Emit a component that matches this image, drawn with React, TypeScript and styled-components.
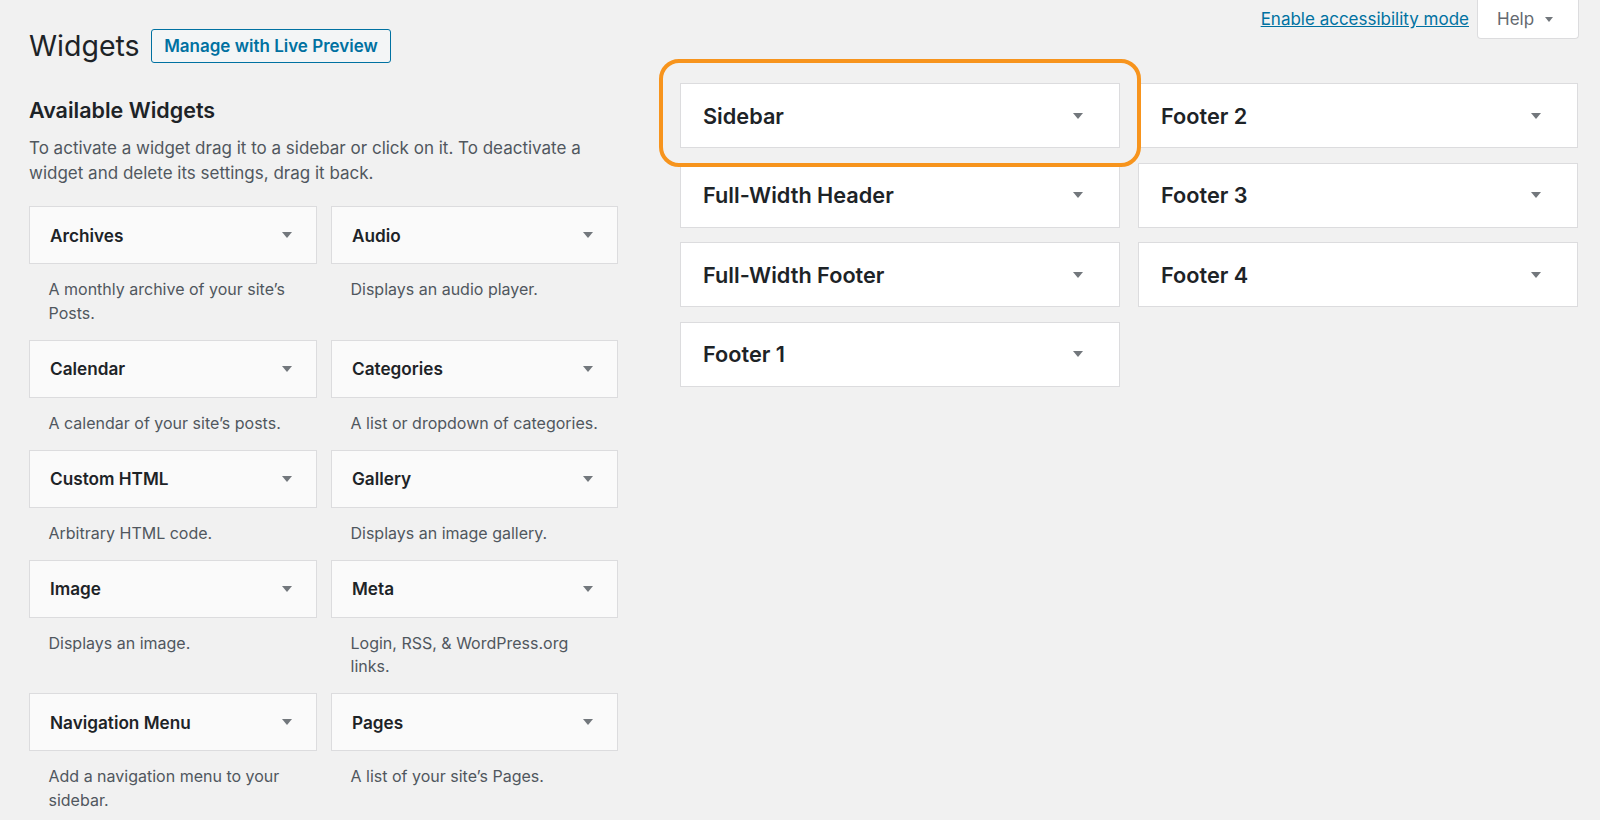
import React from "react"
import styled, { createGlobalStyle } from "styled-components"

const GlobalStyle = createGlobalStyle`
  html, body {
    margin: 0;
    padding: 0;
    background: #f1f1f1;
    font-family: Inter, "Noto Sans", "Liberation Sans", sans-serif;
    color: #1d2327;
  }
`

const Page = styled.div`
  padding: 0 21px 0 29px;
  min-height: 820px;
  box-sizing: border-box;
`

const TopBar = styled.div`
  display: flex;
  justify-content: space-between;
  align-items: flex-start;
`

const TitleRow = styled.div`
  display: flex;
  align-items: center;
  gap: 11px;
  padding-top: 29px;
`

const PageTitle = styled.h1`
  margin: 0;
  font-size: 28.5px;
  font-weight: 400;
  line-height: 34px;
  color: #1d2327;
`

const OutlineButton = styled.button`
  height: 34px;
  padding: 0 12.5px;
  border: 1px solid #0071a1;
  border-radius: 3px;
  background: #f3f5f6;
  color: #0071a1;
  font-family: inherit;
  font-size: 17px;
  font-weight: 600;
`

const MetaLinks = styled.div`
  display: flex;
  align-items: flex-start;
  gap: 8px;
`

const A11yLink = styled.a`
  margin-top: 8px;
  font-size: 17px;
  line-height: 22px;
  color: #0071a1;
  text-decoration: underline;
`

const HelpTab = styled.button`
  display: flex;
  align-items: center;
  gap: 11px;
  width: 102px;
  height: 39px;
  padding: 0 0 0 19px;
  border: 1px solid #dcdcde;
  border-top: none;
  border-radius: 0 0 4px 4px;
  background: #fff;
  color: #646970;
  font-family: inherit;
  font-size: 17px;
`

const Columns = styled.div`
  display: grid;
  grid-template-columns: 589px 1fr;
  gap: 62px;
  margin-top: 20px;
`

const LeftColumn = styled.div`
  padding-top: 13px;
`

const SectionTitle = styled.h2`
  margin: 0;
  font-size: 21.5px;
  font-weight: 600;
  line-height: 28px;
`

const Intro = styled.p`
  margin: 12px 0 21px;
  font-size: 17px;
  line-height: 24.5px;
  color: #50575e;
`

const WidgetGrid = styled.div`
  display: grid;
  grid-template-columns: 288px 287px;
  column-gap: 14px;
`

const WidgetCell = styled.div``

const WidgetBox = styled.div`
  display: flex;
  align-items: center;
  justify-content: space-between;
  height: 58px;
  box-sizing: border-box;
  padding: 0 24px 0 20px;
  background: #fafafa;
  border: 1px solid #dcdcde;
  font-size: 17.2px;
  font-weight: 600;
  color: #1d2327;
`

const WidgetDesc = styled.p`
  margin: 0;
  padding: 14px 19px 14.5px 19.5px;
  font-size: 16px;
  line-height: 23.5px;
  color: #50575e;
`

const SidebarGrid = styled.div`
  display: grid;
  grid-template-columns: 440px 440px;
  column-gap: 18px;
  align-items: start;
`

const SidebarColumn = styled.div`
  display: flex;
  flex-direction: column;
  gap: 14.5px;
`

const SidebarHolder = styled.div`
  position: relative;
`

const Highlight = styled.div`
  position: absolute;
  top: -24px;
  left: -21px;
  right: -21px;
  bottom: -19px;
  border: 4px solid #f7941d;
  border-radius: 20px;
  pointer-events: none;
`

const SidebarBox = styled.div`
  display: flex;
  align-items: center;
  justify-content: space-between;
  height: 65px;
  box-sizing: border-box;
  padding: 0 36px 0 22px;
  background: #fff;
  border: 1px solid #dcdcde;
  font-size: 21.7px;
  font-weight: 600;
  color: #1d2327;
`

const Arrow = styled.span<{ $size?: number }>`
  width: 0;
  height: 0;
  border-left: ${({ $size }) => $size ?? 5}px solid transparent;
  border-right: ${({ $size }) => $size ?? 5}px solid transparent;
  border-top: ${({ $size }) => ($size ?? 5) + 1}px solid #72777c;
`

const widgets: [string, string][] = [
  ["Archives", "A monthly archive of your site’s Posts."],
  ["Audio", "Displays an audio player."],
  ["Calendar", "A calendar of your site’s posts."],
  ["Categories", "A list or dropdown of categories."],
  ["Custom HTML", "Arbitrary HTML code."],
  ["Gallery", "Displays an image gallery."],
  ["Image", "Displays an image."],
  ["Meta", "Login, RSS, & WordPress.org links."],
  ["Navigation Menu", "Add a navigation menu to your sidebar."],
  ["Pages", "A list of your site’s Pages."],
]

const leftSidebars = ["Full-Width Header", "Full-Width Footer", "Footer 1"]
const rightSidebars = ["Footer 2", "Footer 3", "Footer 4"]

const App = () => {
  return (
    <Page>
      <GlobalStyle />
      <TopBar>
        <TitleRow>
          <PageTitle>Widgets</PageTitle>
          <OutlineButton>Manage with Live Preview</OutlineButton>
        </TitleRow>
        <MetaLinks>
          <A11yLink href="#">Enable accessibility mode</A11yLink>
          <HelpTab>
            Help <Arrow $size={4} />
          </HelpTab>
        </MetaLinks>
      </TopBar>
      <Columns>
        <LeftColumn>
          <SectionTitle>Available Widgets</SectionTitle>
          <Intro>
            To activate a widget drag it to a sidebar or click on it. To deactivate a widget and delete its settings,
            drag it back.
          </Intro>
          <WidgetGrid>
            {widgets.map(([name, desc]) => (
              <WidgetCell key={name}>
                <WidgetBox>
                  {name}
                  <Arrow />
                </WidgetBox>
                <WidgetDesc>{desc}</WidgetDesc>
              </WidgetCell>
            ))}
          </WidgetGrid>
        </LeftColumn>
        <SidebarGrid>
          <SidebarColumn>
            <SidebarHolder>
              <Highlight />
              <SidebarBox>
                Sidebar
                <Arrow />
              </SidebarBox>
            </SidebarHolder>
            {leftSidebars.map((name) => (
              <SidebarBox key={name}>
                {name}
                <Arrow />
              </SidebarBox>
            ))}
          </SidebarColumn>
          <SidebarColumn>
            {rightSidebars.map((name) => (
              <SidebarBox key={name}>
                {name}
                <Arrow />
              </SidebarBox>
            ))}
          </SidebarColumn>
        </SidebarGrid>
      </Columns>
    </Page>
  )
}

export default App
